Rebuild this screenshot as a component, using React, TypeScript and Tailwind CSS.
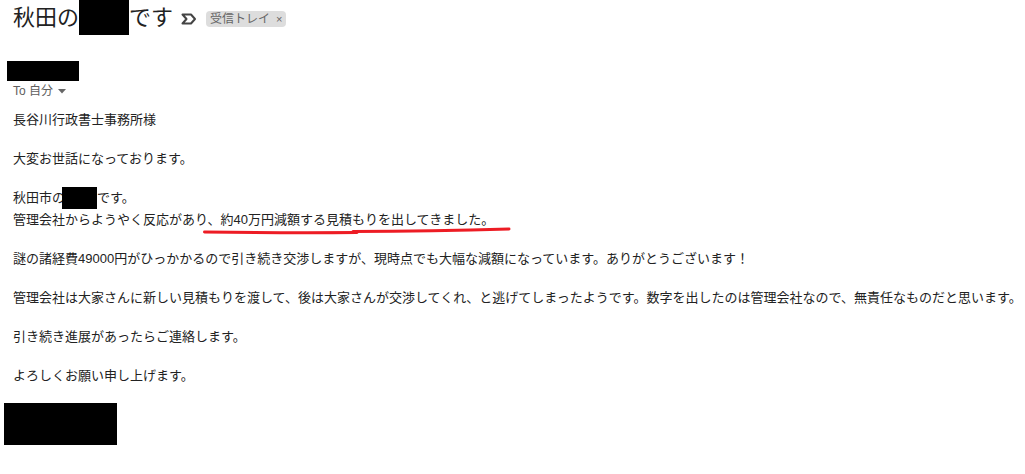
import React from 'react'

const ImportantMark = () => (
  <svg width="16" height="12" viewBox="0 0 16 12" className="shrink-0">
    <path d="M1.5 1.5 H10 L14 6 L10 10.5 H1.5 L5.5 6 Z" fill="none" stroke="#444" strokeWidth="2" strokeLinejoin="round" />
  </svg>
)

const Redacted = ({ className }: { className: string }) => <div className={'bg-black ' + className} />

const App = () => {
  return (
    <div className="w-[1025px] h-[474px] bg-white overflow-hidden text-[#222] font-['Liberation_Sans','Noto_Sans_CJK_JP',sans-serif]">
      {/* subject line */}
      <div className="flex items-center h-[35px] pl-[13px]">
        <span className="text-[22px] leading-[35px]">秋田の</span>
        <span className="inline-block w-[50px] h-[35px] bg-black" />
        <span className="text-[22px] leading-[35px]">です</span>
        <span className="ml-[8px] mt-[2px]">
          <ImportantMark />
        </span>
        <span className="ml-[9px] mt-[2px] flex items-center h-[16px] px-[4px] rounded-[4px] bg-[#dddddd] text-[#666] text-[12px] leading-[16px]">
          受信トレイ
          <span className="ml-[6px] text-[11px]">×</span>
        </span>
      </div>

      <Redacted className="mt-[26px] ml-[7px] w-[72px] h-[20px]" />

      <div className="mt-[2px] ml-[13px] flex items-center gap-[5px] text-[12px] leading-[16px] text-[#5e5e5e]">
        <span>To 自分</span>
        <svg width="8" height="5" viewBox="0 0 8 5">
          <path d="M0 0 H8 L4 4.5 Z" fill="#666" />
        </svg>
      </div>

      {/* message body */}
      <div className="mt-[10px] ml-[13px] flex flex-col gap-[17px] text-[13px] leading-[22px] whitespace-nowrap">
        <p>長谷川行政書士事務所様</p>
        <p>大変お世話になっております。</p>
        <div className="relative">
          <p className="flex items-center">
            秋田市の
            <span className="inline-block w-[35px] h-[22px] bg-black -ml-[3px]" />
            です。
          </p>
          <p>管理会社からようやく反応があり、約40万円減額する見積もりを出してきました。</p>
          <svg className="absolute left-[190px] top-[40px]" width="312" height="10" viewBox="0 0 312 10">
            <path d="M1.5 5 Q80 6 154 5.5" fill="none" stroke="#ed1c24" strokeWidth="3" strokeLinecap="round" />
            <path d="M150 4.5 Q230 4 306 2" fill="none" stroke="#ed1c24" strokeWidth="3" strokeLinecap="round" />
          </svg>
        </div>
        <p>謎の諸経費49000円がひっかかるので引き続き交渉しますが、現時点でも大幅な減額になっています。ありがとうございます！</p>
        <p>管理会社は大家さんに新しい見積もりを渡して、後は大家さんが交渉してくれ、と逃げてしまったようです。数字を出したのは管理会社なので、無責任なものだと思います。</p>
        <p>引き続き進展があったらご連絡します。</p>
        <p>よろしくお願い申し上げます。</p>
      </div>

      <Redacted className="mt-[16px] ml-[4px] w-[113px] h-[42px]" />
    </div>
  )
}

export default App
